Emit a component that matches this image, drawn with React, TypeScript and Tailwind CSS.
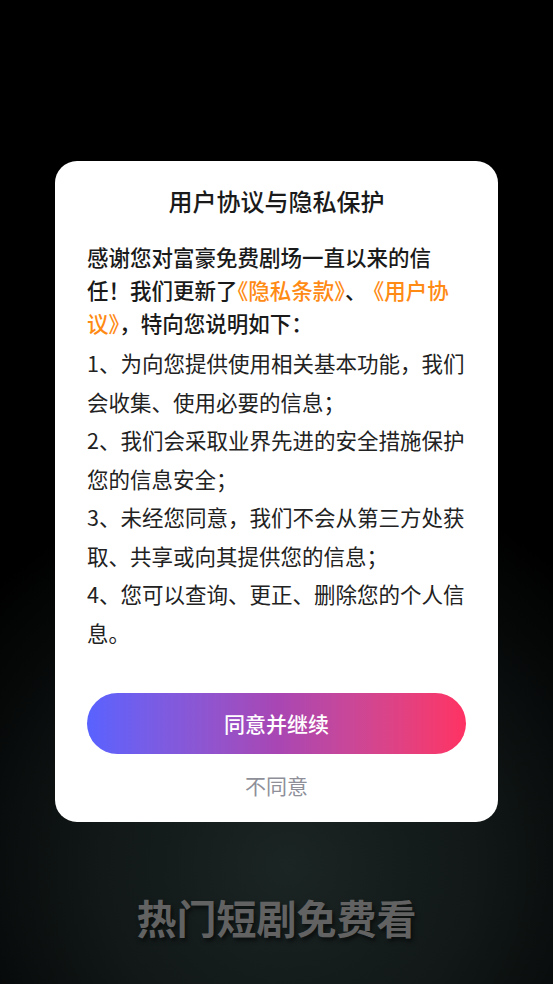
import React from "react";

const font = { fontFamily: '"Noto Sans CJK SC", "Noto Sans", sans-serif' };

export default function App() {
  return (
    <div
      className="w-[553px] h-[984px] overflow-hidden flex flex-col items-center bg-black bg-[radial-gradient(ellipse_75%_40%_at_52%_88%,#1b2524_0%,#111817_45%,#060808_80%,#000_100%)] [text-spacing-trim:space-all]"
      style={font}
    >
      <div className="mt-[161px] w-[443px] bg-white rounded-[22px] px-[32px] pt-[23px] pb-[22px] flex flex-col">
        <h1 className="text-center text-[24px] leading-[34px] font-medium text-[#1a1a1a]">
          用户协议与隐私保护
        </h1>
        <p className="mt-[22px] text-[21.5px] leading-[33px] font-medium text-[#1a1a1a]">
          感谢您对富豪免费剧场一直以来的信任！我们更新了
          <span className="text-[#ff8a14] [font-feature-settings:'halt']">《隐私条款》</span>、
          <span className="ml-[7px] text-[#ff8a14] [font-feature-settings:'halt']">《用户协议》</span>，特向您说明如下：
        </p>
        <div className="mt-[5px] text-[21.5px] leading-[38.5px] text-[#222222]">
          <p>1、为向您提供使用相关基本功能，我们会收集、使用必要的信息；</p>
          <p>2、我们会采取业界先进的安全措施保护您的信息安全；</p>
          <p>3、未经您同意，我们不会从第三方处获取、共享或向其提供您的信息；</p>
          <p>4、您可以查询、更正、删除您的个人信息。</p>
        </div>
        <button className="mt-[41px] h-[61px] w-full rounded-full bg-linear-to-r from-[#5862ff] via-[#a846b4] to-[#ff3162] text-white text-[21px] font-medium flex items-center justify-center">
          同意并继续
        </button>
        <div className="mt-[16px] text-center text-[21px] leading-[30px] text-[#8e8f99]">
          不同意
        </div>
      </div>
      <div className="mt-[69px] text-[40px] leading-[52px] font-bold text-[#626262] [text-shadow:2px_3px_4px_rgba(0,0,0,0.6)]">
        热门短剧免费看
      </div>
    </div>
  );
}
